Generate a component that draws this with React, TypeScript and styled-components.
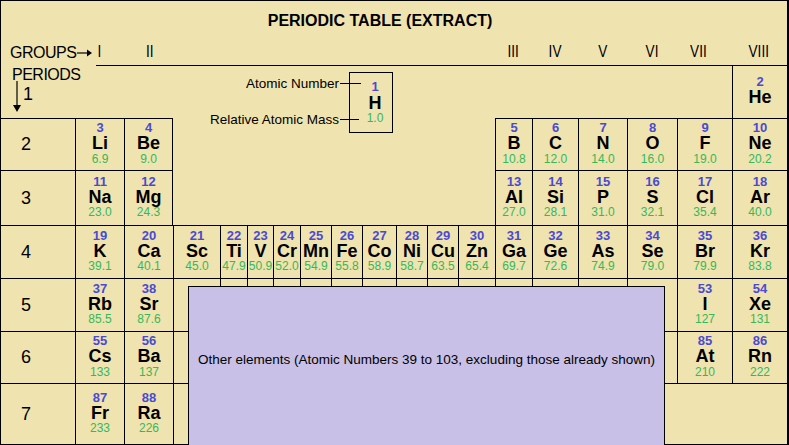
import React from 'react';
import styled, { createGlobalStyle } from 'styled-components';

const Global = createGlobalStyle`
  body { margin: 0; font-family: "Liberation Sans", Arial, sans-serif; }
`;

type El = [number, string, string, number, number];

// [number, symbol, mass, grid column, grid row]
const elements: El[] = [
  [2, 'He', '', 19, 2],
  [3, 'Li', '6.9', 2, 3],
  [4, 'Be', '9.0', 3, 3],
  [5, 'B', '10.8', 14, 3],
  [6, 'C', '12.0', 15, 3],
  [7, 'N', '14.0', 16, 3],
  [8, 'O', '16.0', 17, 3],
  [9, 'F', '19.0', 18, 3],
  [10, 'Ne', '20.2', 19, 3],
  [11, 'Na', '23.0', 2, 4],
  [12, 'Mg', '24.3', 3, 4],
  [13, 'Al', '27.0', 14, 4],
  [14, 'Si', '28.1', 15, 4],
  [15, 'P', '31.0', 16, 4],
  [16, 'S', '32.1', 17, 4],
  [17, 'Cl', '35.4', 18, 4],
  [18, 'Ar', '40.0', 19, 4],
  [19, 'K', '39.1', 2, 5],
  [20, 'Ca', '40.1', 3, 5],
  [21, 'Sc', '45.0', 4, 5],
  [22, 'Ti', '47.9', 5, 5],
  [23, 'V', '50.9', 6, 5],
  [24, 'Cr', '52.0', 7, 5],
  [25, 'Mn', '54.9', 8, 5],
  [26, 'Fe', '55.8', 9, 5],
  [27, 'Co', '58.9', 10, 5],
  [28, 'Ni', '58.7', 11, 5],
  [29, 'Cu', '63.5', 12, 5],
  [30, 'Zn', '65.4', 13, 5],
  [31, 'Ga', '69.7', 14, 5],
  [32, 'Ge', '72.6', 15, 5],
  [33, 'As', '74.9', 16, 5],
  [34, 'Se', '79.0', 17, 5],
  [35, 'Br', '79.9', 18, 5],
  [36, 'Kr', '83.8', 19, 5],
  [37, 'Rb', '85.5', 2, 6],
  [38, 'Sr', '87.6', 3, 6],
  [53, 'I', '127', 18, 6],
  [54, 'Xe', '131', 19, 6],
  [55, 'Cs', '133', 2, 7],
  [56, 'Ba', '137', 3, 7],
  [85, 'At', '210', 18, 7],
  [86, 'Rn', '222', 19, 7],
  [87, 'Fr', '233', 2, 8],
  [88, 'Ra', '226', 3, 8],
];

const groups: [string, number, number][] = [
  ['I', 2, 0], ['II', 3, 2], ['III', 14, 0], ['IV', 15, 0], ['V', 16, 0],
  ['VI', 17, 0], ['VII', 18, -12], ['VIII', 19, -2],
];

const blanks: [number, number][] = [];
for (let r = 6; r <= 7; r++) for (let c = 4; c <= 17; c++) blanks.push([c, r]);

export default function App() {
  return (
    <>
      <Global />
      <S.Table>
        <S.Title>PERIODIC TABLE (EXTRACT)</S.Title>
        <S.GroupsLabel>
          GROUPS
          <svg width="16" height="10" viewBox="0 0 16 10">
            <line x1="0" y1="5" x2="11" y2="5" stroke="#000" strokeWidth="1.2" />
            <path d="M10 1.5 L15 5 L10 8.5 Z" fill="#000" />
          </svg>
        </S.GroupsLabel>
        {groups.map(([g, col, shift]) => (
          <S.Group key={g} $col={col} $shift={shift}>{g}</S.Group>
        ))}
        <S.Rule />

        <S.PeriodOne>
          <span>PERIODS</span>
          <S.ArrowRow>
            <svg width="10" height="32" viewBox="0 0 10 32">
              <line x1="5" y1="0" x2="5" y2="26" stroke="#000" strokeWidth="1.2" />
              <path d="M1 24 L5 31 L9 24 Z" fill="#000" />
            </svg>
            <S.PeriodNum>1</S.PeriodNum>
          </S.ArrowRow>
        </S.PeriodOne>

        <S.Legend>
          <S.LegendLabels>
            <S.LegendLine>Atomic Number<S.Connector $w={21} /></S.LegendLine>
            <S.LegendLine>Relative Atomic Mass<S.Connector $w={19} /></S.LegendLine>
          </S.LegendLabels>
          <S.KeyBox>
            <S.Num>1</S.Num>
            <S.Sym>H</S.Sym>
            <S.Mass>1.0</S.Mass>
          </S.KeyBox>
        </S.Legend>

        {[2, 3, 4, 5, 6, 7].map((p) => (
          <S.Period key={p} style={{ gridRow: p + 1 }}>{p}</S.Period>
        ))}

        {elements.map(([n, sym, mass, col, row]) => (
          <S.Cell
            key={n}
            $col={col}
            $row={row}
            $top={n !== 2}
            $right={n === 4 || n === 12}>
            <S.Num>{n}</S.Num>
            <S.Sym>{sym}</S.Sym>
            {mass && <S.Mass>{mass}</S.Mass>}
          </S.Cell>
        ))}

        {blanks.map(([c, r]) => (
          <S.Cell key={`${c}-${r}`} $col={c} $row={r} $top $right={false} />
        ))}
        <S.BottomSpan />

        <S.Others>
          Other elements (Atomic Numbers 39 to 103, excluding those already shown)
        </S.Others>
      </S.Table>
    </>
  );
}

const S = {
  Table: styled.div`
    position: relative;
    box-sizing: border-box;
    width: 789px;
    height: 445px;
    border: 1px solid #000;
    border-right-width: 2px;
    background: #efe3b0;
    display: grid;
    grid-template-columns: 74px 49px 49px 47px 27px 26px 27px 31px 31px 34px 31px 31px 37px 37px 46px 49px 50px 55px 55px;
    grid-template-rows: 65px 52px 52px 55px 53px 53px 52px 1fr;
    color: #000;
  `,
  Title: styled.div`
    grid-column: 1 / -1;
    grid-row: 1;
    align-self: start;
    padding: 11px 28px 0 0;
    text-align: center;
    font-size: 16px;
    font-weight: bold;
  `,
  GroupsLabel: styled.div`
    grid-column: 1 / 3;
    grid-row: 1;
    align-self: end;
    padding: 0 0 4px 9px;
    font-size: 16px;
    letter-spacing: -0.5px;
    display: flex;
    align-items: center;
    gap: 1px;
  `,
  Group: styled.div<{ $col: number; $shift: number }>`
    grid-column: ${(p) => p.$col};
    grid-row: 1;
    align-self: end;
    justify-self: center;
    margin: 0 0 4px ${(p) => p.$shift}px;
    font-size: 17px;
    transform: scaleX(0.8);
  `,
  Rule: styled.div`
    grid-column: 2 / -1;
    grid-row: 1;
    align-self: end;
    margin-left: 21px;
    border-bottom: 1px solid #000;
  `,
  PeriodOne: styled.div`
    grid-column: 1;
    grid-row: 2;
    padding: 0 0 0 11px;
    font-size: 16px;
    letter-spacing: -0.5px;
    display: flex;
    flex-direction: column;
  `,
  ArrowRow: styled.div`
    display: flex;
    align-items: flex-start;
    gap: 1px;
    margin-top: -3px;
  `,
  PeriodNum: styled.span`
    font-size: 18px;
    padding-top: 3px;
  `,
  Period: styled.div`
    grid-column: 1;
    border-top: 1px solid #000;
    display: flex;
    align-items: center;
    padding-left: 20px;
    font-size: 18px;
  `,
  Legend: styled.div`
    grid-column: 4 / 14;
    grid-row: 2 / 4;
    align-self: start;
    margin-top: 6px;
    padding-right: 102px;
    display: flex;
    justify-content: flex-end;
    position: relative;
    z-index: 1;
  `,
  LegendLabels: styled.div`
    display: flex;
    flex-direction: column;
    align-items: flex-end;
    justify-content: space-between;
    padding: 4px 0 6px;
    font-size: 13.5px;
  `,
  LegendLine: styled.div`
    display: flex;
    align-items: center;
    gap: 1px;
  `,
  Connector: styled.span<{ $w: number }>`
    display: inline-block;
    width: ${(p) => p.$w}px;
    height: 1px;
    background: #000;
    margin-right: ${(p) => 21 - p.$w}px;
  `,
  KeyBox: styled.div`
    box-sizing: border-box;
    width: 44px;
    height: 61px;
    margin-left: -12px;
    border: 1px solid #000;
    display: flex;
    flex-direction: column;
    align-items: center;
    justify-content: center;
    padding: 0 4px 0 12px;
    line-height: 1.1;
  `,
  Cell: styled.div<{ $col: number; $row: number; $top: boolean; $right: boolean }>`
    grid-column: ${(p) => p.$col};
    grid-row: ${(p) => p.$row};
    border-left: 1px solid #000;
    border-top: ${(p) => (p.$top ? '1px solid #000' : 'none')};
    border-right: ${(p) => (p.$right ? '1px solid #000' : 'none')};
    display: flex;
    flex-direction: column;
    align-items: center;
    justify-content: center;
    line-height: 1.08;
    padding-bottom: 2px;
  `,
  BottomSpan: styled.div`
    grid-column: 4 / -1;
    grid-row: 8;
    border-left: 1px solid #000;
    border-top: 1px solid #000;
  `,
  Num: styled.span`
    color: #4a4ad2;
    font-weight: bold;
    font-size: 13px;
  `,
  Sym: styled.span`
    font-weight: bold;
    font-size: 18px;
    line-height: 0.95;
  `,
  Mass: styled.span`
    color: #35b85a;
    font-size: 12px;
  `,
  Others: styled.div`
    position: absolute;
    left: 187px;
    top: 285px;
    width: 477px;
    bottom: -1px;
    box-sizing: border-box;
    background: #c8c0e6;
    border: 1px solid #000;
    border-bottom: none;
    display: flex;
    align-items: center;
    justify-content: center;
    padding-bottom: 14px;
    font-size: 13.5px;
    z-index: 2;
  `,
};
